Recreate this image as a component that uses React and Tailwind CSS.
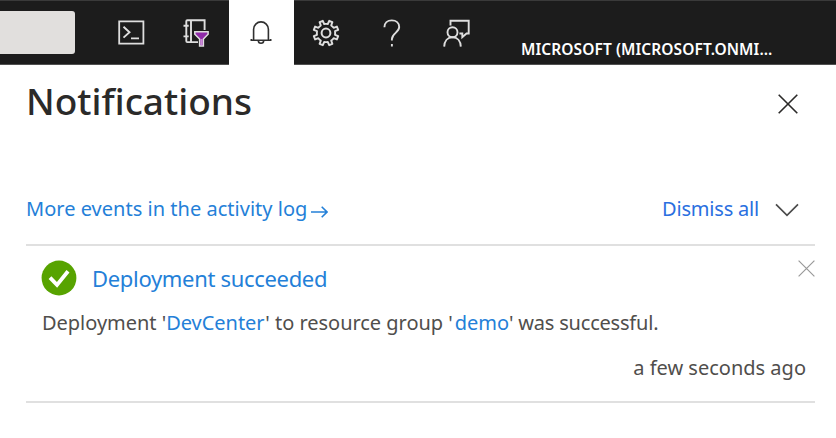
import React from 'react';

function Cross({ size, className, width }) {
  return (
    <svg width={size} height={size} viewBox="0 0 20 20" fill="none" stroke="currentColor" strokeWidth={width} className={className}>
      <path d="M.7.7 19.3 19.3M19.3.7.7 19.3" />
    </svg>
  );
}

function TopBar() {
  return (
    <header className="flex h-[65px] w-full border-b border-[#505050] border-t border-t-[#3a3a3a] bg-[#1c1c1c] text-[#dedede]">
      <div className="mt-[10px] h-[43px] w-[75px] rounded-r-[3px] bg-[#e1dfdd]" />
      <div className="flex w-[154px] items-center pl-[43px]">
        <svg width="28" height="26" viewBox="0 0 28 26" fill="none" stroke="currentColor" strokeWidth="1.8">
          <path d="M1.2 1.4h24.2v22.2H1.2z" />
          <path d="m5.5 6.8 6 5.4-6 5.4M13 18.4h8" strokeWidth="1.9" />
        </svg>
        <svg width="27" height="30" viewBox="0 0 27 30" fill="none" stroke="currentColor" strokeWidth="1.9" className="mt-[-2px] ml-[37px]">
          <path d="M21.6 13V3.2H4.3q-1 0-1 1v19.9q0 1 1 1H15M8 3.2v21.9M.5 8.8h5.2M.5 19.4h5.2" />
          <path d="M11.8 14.8h13.3v2.5L20.4 22v7h-3.8v-7l-4.8-4.7z" fill="#8f2aa8" strokeWidth="1.5" />
          <path d="M18.5 22v6.3" stroke="#c98ad6" strokeWidth="2" />
        </svg>
      </div>
      <div className="-my-px flex h-[65px] w-[65px] items-center justify-center bg-white text-[#303030]">
        <svg width="22" height="26" viewBox="0 0 22 26" fill="none" stroke="currentColor" strokeWidth="1.6" className="mr-[1px]">
          <path d="M3.6 20.2V9.3a7.4 7.4 0 0 1 14.8 0v10.9M1.3 19v1.3h19.4V19M8.3 20.6a2.7 2.7 0 0 0 5.4 0" />
        </svg>
      </div>
      <div className="flex w-[218px] items-center pl-[18px]">
        <svg width="28" height="28" viewBox="-14 -14 28 28" fill="none" stroke="currentColor" strokeWidth="1.9" strokeLinejoin="round">
          <circle r="4.4" strokeWidth="2" />
          <path d="M-1.8-9-3.2-12.2-6.4-10.9-5.2-7.6Q-6.6-6.6-7.6-5.2L-10.9-6.4-12.2-3.2-9-1.8Q-9.3 0-9 1.8L-12.2 3.2-10.9 6.4-7.6 5.2Q-6.6 6.6-5.2 7.6L-6.4 10.9-3.2 12.2-1.8 9Q0 9.3 1.8 9L3.2 12.2 6.4 10.9 5.2 7.6Q6.6 6.6 7.6 5.2L10.9 6.4 12.2 3.2 9 1.8Q9.3 0 9-1.8L12.2-3.2 10.9-6.4 7.6-5.2Q6.6-6.6 5.2-7.6L6.4-10.9 3.2-12.2 1.8-9Q0-9.3-1.8-9z" />
        </svg>
        <svg width="18" height="28" viewBox="0 0 18 28" fill="none" stroke="currentColor" strokeWidth="1.9" className="ml-[43px]">
          <path d="M1.4 8.3C1.4 4 4.5 1.4 8.8 1.4s7.4 2.5 7.4 6.6c0 5.5-7.3 6.3-7.3 12.2v1.4M8.9 25v2.5" />
        </svg>
        <svg width="28" height="28" viewBox="0 0 28 28" fill="none" stroke="currentColor" strokeWidth="1.9" className="ml-[42px]">
          <path d="M7.5 6.5V1.7h18.2v12.8h-2.2l-4.2 3.7v-3.7h-2.9" />
          <circle cx="9.5" cy="13.2" r="5" />
          <path d="M1.2 27.6c.2-5.7 3.4-9.4 8.3-9.4s8.1 3.7 8.3 9.4" />
        </svg>
      </div>
      <div className="ml-[9px] pt-[38px] text-[15.5px] leading-[20px] font-semibold tracking-[0.08px] whitespace-nowrap text-white">
        MICROSOFT (MICROSOFT.ONMI...
      </div>
    </header>
  );
}

export default function App() {
  return (
    <div className="h-[438px] w-[836px] overflow-hidden bg-white font-['Noto_Sans',sans-serif] text-[#504e4c]">
      <TopBar />
      <main className="pl-[26px]">
        <div className="flex h-[72px] w-[772px] items-center justify-between whitespace-nowrap text-[#2b2a29]">
          <h1 className="text-[37px] leading-[72px] font-medium tracking-[0px]">Notifications</h1>
          <Cross size={20} width={1.6} className="mt-[6px]" />
        </div>
        <div className="mt-[57px] flex h-[30px] w-[773px] items-center justify-between text-[20px] leading-[30px] whitespace-nowrap">
          <a className="flex items-center text-[#2480d8]">
            <span className="tracking-[0.02px]">More events in the activity log</span>
            <svg width="17" height="12" viewBox="0 0 17 12" fill="none" stroke="currentColor" strokeWidth="1.6" className="mt-[5px] ml-[4px]">
              <path d="M0 6h16M10.7.8 16 6l-5.3 5.2" />
            </svg>
          </a>
          <div className="flex items-center">
            <a className="tracking-[-0.2px] text-[#2a6fe0]">Dismiss all</a>
            <svg width="24" height="14" viewBox="0 0 24 14" fill="none" stroke="#4c4c4c" strokeWidth="1.7" className="mt-[1px] ml-[16px]">
              <path d="m1 1.3 11 11 11-11" />
            </svg>
          </div>
        </div>
        <section className="mt-[20px] h-[159px] w-[789px] border-y-2 border-[#e0e0e0] pl-[15px]">
          <div className="flex h-[64px] items-center whitespace-nowrap">
            <svg width="36" height="36" viewBox="0 0 36 36">
              <circle cx="18" cy="18" r="17.4" fill="#57a300" />
              <path d="m9 17.6 7 7.3L27 11.2" fill="none" stroke="#fff" strokeWidth="3.8" />
            </svg>
            <a className="ml-[15px] text-[22px] leading-[32px] tracking-[-0.32px] text-[#2480d8]">Deployment succeeded</a>
            <Cross size={17} width={1.4} className="mr-0 mb-[20px] ml-auto text-[#999]" />
          </div>
          <p className="mt-[-2px] ml-[1px] h-[30px] text-[20px] leading-[30px] tracking-[-0.03px] whitespace-nowrap">
            Deployment '<a className="text-[#2480d8]">DevCenter</a>' to resource group '<a className="ml-[2px] text-[#2480d8]">demo</a>
            <span className="tracking-[-0.2px]">' was successful.</span>
          </p>
          <p className="mt-[15px] mr-[9px] text-right text-[20px] leading-[30px] tracking-[0px]">a few seconds ago</p>
        </section>
      </main>
    </div>
  );
}
